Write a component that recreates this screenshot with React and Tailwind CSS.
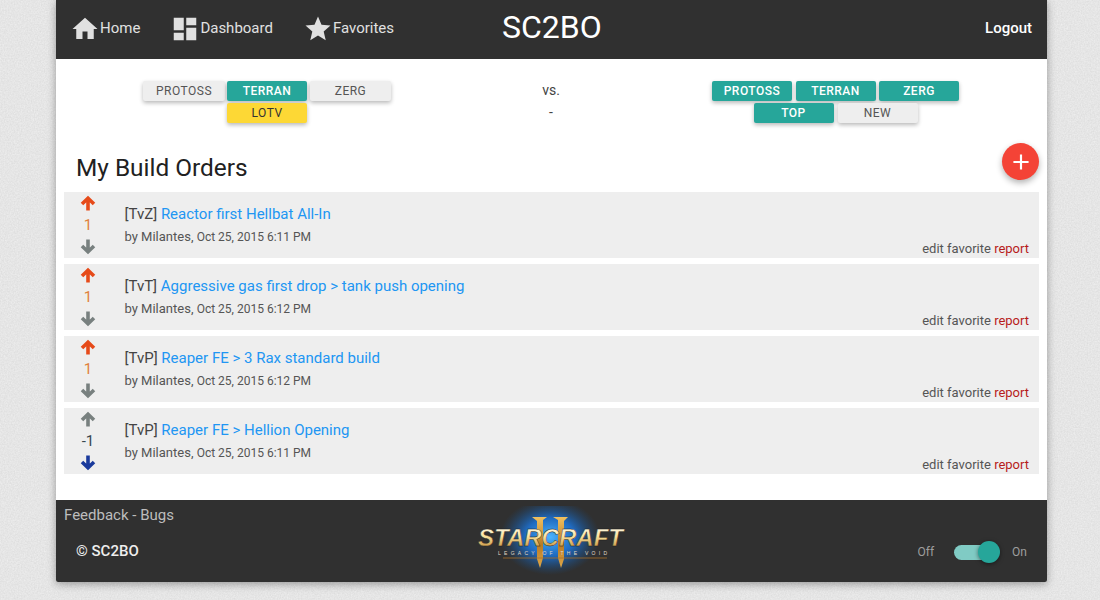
const icons = {
  home: 'M10 20v-6h4v6h5v-8h3L12 3 2 12h3v8z',
  dashboard: 'M3 13h8V3H3v10zm0 8h8v-6H3v6zm10 0h8V11h-8v10zm0-18v6h8V3h-8z',
  star: 'M12 17.27L18.18 21l-1.64-7.03L22 9.24l-7.19-.61L12 2 9.19 8.63 2 9.24l5.46 4.73L5.82 21z',
};

const builds = [
  { match: '[TvZ]', title: 'Reactor first Hellbat All-In', date: 'Oct 25, 2015 6:11 PM', score: 1, vote: 'up' },
  { match: '[TvT]', title: 'Aggressive gas first drop > tank push opening', date: 'Oct 25, 2015 6:12 PM', score: 1, vote: 'up' },
  { match: '[TvP]', title: 'Reaper FE > 3 Rax standard build', date: 'Oct 25, 2015 6:12 PM', score: 1, vote: 'up' },
  { match: '[TvP]', title: 'Reaper FE > Hellion Opening', date: 'Oct 25, 2015 6:11 PM', score: -1, vote: 'down' },
];

const NavItem = ({ icon, label, className }) => (
  <a className={`flex items-center text-[15px] text-[#e0e0e0] ${className}`}>
    <svg viewBox="0 0 24 24" className="h-[30px] w-[30px] fill-[#e0e0e0]">
      <path d={icons[icon]} />
    </svg>
    <span>{label}</span>
  </a>
);

const FilterButton = ({ children, tone = 'off', className = '' }) => {
  const tones = {
    off: 'bg-[#eeeeee] text-[#555555] font-normal',
    on: 'bg-[#26a69a] text-white font-medium',
    lotv: 'bg-[#fdd835] text-[#333333] font-normal',
  };
  return (
    <button className={`flex h-5 w-20 items-center justify-center rounded-[2px] text-xs tracking-[0.5px] shadow-[0_2px_4px_rgba(0,0,0,0.28)] ${tones[tone]} ${className}`}>
      {children}
    </button>
  );
};

const Arrow = ({ dir, color }) => (
  <svg viewBox="0 0 16 16" className={`h-4 w-4 ${color}`} fill="none" stroke="currentColor" strokeWidth="3.6">
    {dir === 'up' ? <path d="M8 15.5V3.5M2 9L8 3.2 14 9" /> : <path d="M8 .5v12M2 7l6 5.8L14 7" />}
  </svg>
);

const BuildRow = ({ build }) => (
  <div className="relative flex h-[66px] bg-[#eeeeee]">
    <div className="flex w-12 flex-col items-center pt-[3px]">
      <Arrow dir="up" color={build.vote === 'up' ? 'text-[#e64a19]' : 'text-[#78807f]'} />
      <span className={`mt-[2px] h-[26px] text-[15px] leading-[25px] ${build.vote === 'up' ? 'text-[#e0803c]' : 'text-[#37474f]'}`}>
        {build.score}
      </span>
      <Arrow dir="down" color={build.vote === 'down' ? 'text-[#1a3a9c]' : 'text-[#78807f]'} />
    </div>
    <div className="ml-[12.5px] pt-[12px]">
      <div className="text-[15px] leading-5 text-[#444444]">
        {build.match} <a className="text-[#2196f3]">{build.title}</a>
      </div>
      <div className="mt-[3px] text-[13px] leading-5 text-[#555555]">
        by Milantes, <span className="text-xs">{build.date}</span>
      </div>
    </div>
    <div className="absolute -bottom-[1px] right-[10px] text-[13px] leading-5 text-[#555555]">
      edit favorite <a className="text-[#b71c1c]">report</a>
    </div>
  </div>
);

const Sc2Logo = () => (
  <svg viewBox="0 0 150 70" className="h-[70px] w-[150px]">
    <defs>
      <radialGradient id="glow">
        <stop offset="0%" stopColor="#4ab4ff" />
        <stop offset="50%" stopColor="#1c74d8" stopOpacity="0.85" />
        <stop offset="100%" stopColor="#15508f" stopOpacity="0" />
      </radialGradient>
      <linearGradient id="gold" x1="0" y1="0" x2="0" y2="1">
        <stop offset="0%" stopColor="#ffffff" />
        <stop offset="45%" stopColor="#fbe4a0" />
        <stop offset="100%" stopColor="#b87c24" />
      </linearGradient>
      <linearGradient id="wing" x1="0" y1="0" x2="0" y2="1">
        <stop offset="0%" stopColor="#f0c060" />
        <stop offset="55%" stopColor="#b87a24" />
        <stop offset="100%" stopColor="#e0a848" />
      </linearGradient>
    </defs>
    <ellipse cx="74" cy="31" rx="50" ry="38" fill="url(#glow)" />
    <path fill="url(#wing)" d="M56 11h15l-4 3v38l-3 10-3-9V15zM77 11h15l-4 4v38l-3 9-3-10V14z" />
    <text x="2" y="40" textLength="145" lengthAdjust="spacingAndGlyphs" fontFamily="Liberation Sans" fontWeight="700" fontStyle="italic" fontSize="24" fill="url(#gold)" stroke="#1a1a1a" strokeWidth="0.4">
      STARCRAFT
    </text>
    <text x="22" y="49" textLength="109" fontFamily="Liberation Sans" fontSize="5" fill="#e0dac8">
      LEGACY OF THE VOID
    </text>
    <path d="M27 52h104" stroke="#a8702a" strokeWidth="0.8" />
  </svg>
);

const App = () => {
  return (
    <div className="relative min-h-screen overflow-hidden bg-[#f0f0f0] font-['Roboto',sans-serif]">
      {/* Paper texture behind the page */}
      <svg className="absolute inset-0 h-full w-full">
        <filter id="paper">
          <feTurbulence type="fractalNoise" baseFrequency="0.7" numOctaves="3" />
          <feColorMatrix values="0 0 0 0 0  0 0 0 0 0  0 0 0 0 0  0 0 0 0.09 0" />
        </filter>
        <rect width="100%" height="100%" filter="url(#paper)" />
      </svg>

      <div className="relative ml-14 w-[991px] rounded-b-[2px] bg-white shadow-[0_2px_8px_rgba(0,0,0,0.35)]">
        {/* Header */}
        <header className="relative flex h-[59px] items-center bg-[#303030] pb-[2px] pl-[14px] pr-[15px]">
          <NavItem icon="home" label="Home" />
          <NavItem icon="dashboard" label="Dashboard" className="ml-[30px]" />
          <NavItem icon="star" label="Favorites" className="ml-[30px]" />
          <span className="absolute left-[446px] top-[7px] text-[32px] leading-10 text-white">SC2BO</span>
          <a className="ml-auto text-[15px] font-medium text-white">Logout</a>
        </header>

        {/* Filters */}
        <div className="grid grid-cols-[422px_146px_423px] pt-[22px]">
          <div className="flex flex-col items-center gap-[2px]">
            <div className="flex">
              <FilterButton className="w-[82px]">PROTOSS</FilterButton>
              <FilterButton tone="on" className="ml-[2px]">TERRAN</FilterButton>
              <FilterButton className="ml-[3px] w-[81px]">ZERG</FilterButton>
            </div>
            <FilterButton tone="lotv">LOTV</FilterButton>
          </div>
          <div className="-mt-[1px] flex flex-col items-center gap-[2px] text-sm leading-5 text-[#444444]">
            <span className="h-5">vs.</span>
            <span className="h-5">-</span>
          </div>
          <div className="flex flex-col items-center gap-[2px]">
            <div className="flex gap-[3.5px]">
              <FilterButton tone="on">PROTOSS</FilterButton>
              <FilterButton tone="on">TERRAN</FilterButton>
              <FilterButton tone="on">ZERG</FilterButton>
            </div>
            <div className="flex gap-[4px]">
              <FilterButton tone="on">TOP</FilterButton>
              <FilterButton>NEW</FilterButton>
            </div>
          </div>
        </div>

        {/* Title */}
        <div className="relative">
          <h1 className="ml-5 pt-[29px] text-[24.4px] leading-[32px] text-[#212121]">My Build Orders</h1>
          <button className="absolute right-2 top-[20px] flex h-[37px] w-[37px] items-center justify-center rounded-full bg-[#f44336] shadow-[0_3px_6px_rgba(0,0,0,0.3)]">
            <svg viewBox="0 0 24 24" className="h-[26px] w-[26px] fill-white">
              <path d="M19 13h-6v6h-2v-6H5v-2h6V5h2v6h6v2z" />
            </svg>
          </button>
        </div>

        {/* Build list */}
        <div className="mx-2 mt-2 flex flex-col gap-[6px] pb-[26px]">
          {builds.map((build, i) => (
            <BuildRow key={i} build={build} />
          ))}
        </div>

        {/* Footer */}
        <footer className="relative h-[82px] rounded-b-[2px] bg-[#303030]">
          <a className="absolute left-2 top-[5px] text-[15px] leading-5 text-[#bdbdbd]">Feedback - Bugs</a>
          <span className="absolute left-5 top-[41px] text-[15px] font-medium leading-5 text-[#eeeeee]">© SC2BO</span>
          <div className="absolute left-[420px] top-[6px]">
            <Sc2Logo />
          </div>
          <div className="absolute right-[20px] top-[44px] flex items-center text-xs text-[#9e9e9e]">
            <span>Off</span>
            <span className="relative ml-[20px] mr-[13px] h-[15px] w-[45px] rounded-full bg-[#80cbc4]">
              <span className="absolute -right-[1px] -top-[3.5px] h-[22px] w-[22px] rounded-full bg-[#26a69a] shadow-[0_1px_4px_rgba(0,0,0,0.5)]" />
            </span>
            <span>On</span>
          </div>
        </footer>
      </div>
    </div>
  );
};

export default App;
